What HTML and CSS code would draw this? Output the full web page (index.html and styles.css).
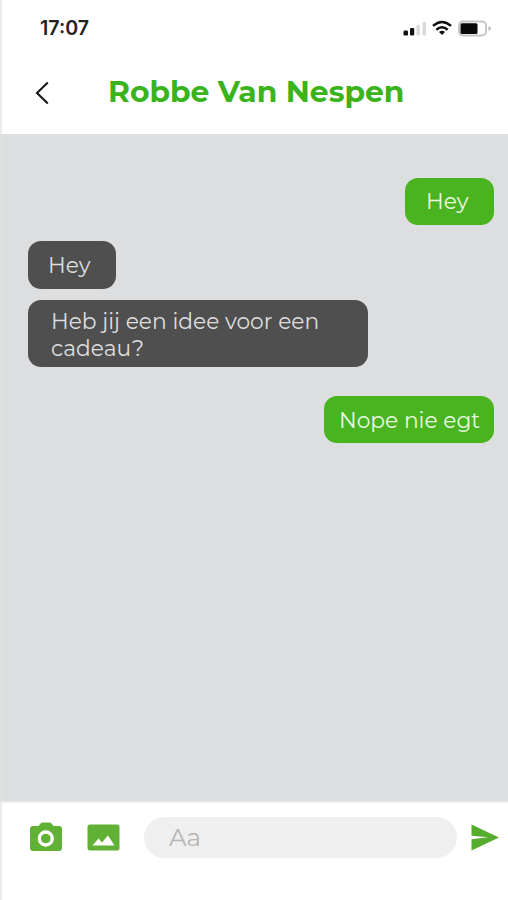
FILE: index.html
```
<!DOCTYPE html>
<html lang="nl">
<head>
<meta charset="utf-8">
<title>Robbe Van Nespen</title>
<link rel="stylesheet" href="styles.css">
</head>
<body>
<div class="phone">
  <div class="status">
    <span class="time">17:07</span>
    <svg class="indicators" width="90" height="18" viewBox="0 0 90 18">
      <rect x="1.500" y="11.500" width="4.500" height="5" rx="1.300" fill="#111"/>
      <rect x="8" y="9" width="4.200" height="7.500" rx="1.300" fill="#111"/>
      <rect x="14.500" y="6" width="3.300" height="10.500" rx="1" fill="#dadada"/>
      <rect x="20.500" y="3" width="3.600" height="13.500" rx="1" fill="#dadada"/>
      <path d="M31 6.900Q40 -1 49 6.900M34.300 10.700Q40 5.800 45.700 10.700" fill="none" stroke="#111" stroke-width="2.500"/>
      <path d="M37 13Q40 10.600 43 13L40 16Z" fill="#111"/>
      <rect x="57" y="2.500" width="27" height="14" rx="4" fill="none" stroke="#c6c6c6" stroke-width="2"/>
      <rect x="58.500" y="4.200" width="17" height="10.800" rx="1.500" fill="#080808"/>
      <path d="M86.500 7Q91.500 9.500 86.500 12Z" fill="#bbb"/>
    </svg>
  </div>
  <header class="header">
    <svg class="back" width="16" height="26" viewBox="0 0 16 26"><path d="M13.800 2.500L3 13L13.800 23.500" fill="none" stroke="#151515" stroke-width="2.100"/></svg>
    <h1 class="name">Robbe Van Nespen</h1>
  </header>
  <main class="chat">
    <div class="bubble sent short">Hey</div>
    <div class="bubble received short">Hey</div>
    <div class="bubble received long">Heb jij een idee voor een<br>cadeau?</div>
    <div class="bubble sent medium">Nope nie egt</div>
  </main>
  <footer class="composer">
    <svg class="camera" width="32" height="30" viewBox="0 0 32 30"><path fill="#61b136" d="M10.500 1.500Q11.500 .5 13 .5H19Q20.500 .5 21.500 1.500L23.500 4H29Q32 4 32 7V26Q32 29 29 29H3Q0 29 0 26V7Q0 4 3 4H8.500Z"/><circle cx="15.800" cy="16.500" r="6.500" fill="none" stroke="#fff" stroke-width="3.300"/></svg>
    <svg class="photo" width="33" height="27" viewBox="0 0 33 27"><rect x=".5" y=".5" width="32" height="26" rx="2.500" fill="#61b136"/><path d="M5.500 21.500L11.500 14.500L15 18.500L21 11.500L27.500 21.500Z" fill="#fff"/></svg>
    <div class="field">Aa</div>
    <svg class="send" width="28" height="27" viewBox="0 0 28 27"><path d="M.5 .5L28 13.500L.5 26.500V15.300L17 13.300L.5 11.800Z" fill="#56ad2d"/></svg>
  </footer>
</div>
</body>
</html>
```
FILE: styles.css
```
* {
  box-sizing: border-box;
}

body {
  margin: 0;
  background: #fff;
  font-family: Montserrat, Inter, "Liberation Sans", sans-serif;
}

.phone {
  display: flex;
  flex-direction: column;
  height: 900px;
}

.status,
.header,
.composer {
  border-left: 2px solid #ebebeb;
}

.status {
  display: flex;
  justify-content: space-between;
  align-items: center;
  height: 56px;
  padding: 0 16px 0 38px;
}

.time {
  font-family: Inter, sans-serif;
  font-size: 19.6px;
  font-weight: 600;
  color: #222;
}

.header {
  display: flex;
  align-items: center;
  height: 78px;
  padding: 0 0 7px 32px;
}

.back {
  margin-top: 3px;
}

.name {
  margin: 0 0 2px 58px;
  font-size: 29.8px;
  font-weight: 700;
  line-height: 36px;
  white-space: nowrap;
  color: #3bb31a;
}

.chat {
  display: flex;
  flex-direction: column;
  align-items: flex-start;
  height: 669px;
  padding: 44px 14px 0 26px;
  background: #dddee0;
  border-left: 2px solid #dfe1df;
  border-bottom: 2px solid #ececed;
}

.bubble {
  display: flex;
  align-items: center;
  height: 47px;
  border-radius: 13px;
  font-size: 21.75px;
  line-height: 27px;
  white-space: nowrap;
}

.sent {
  align-self: flex-end;
  background: #49b41f;
  color: #e8f8e2;
}

.received {
  background: #4f4f4f;
  color: #dedede;
}

.short {
  width: 89px;
  padding-left: 21px;
}

.received.short {
  width: 88px;
  height: 48px;
  margin: 16px 0 11px;
  padding-left: 20px;
}

.long {
  width: 340px;
  height: 67px;
  padding-top: 2px;
  padding-left: 23px;
}

.medium {
  width: 170px;
  margin-top: 29px;
  padding-top: 1px;
  padding-left: 15px;
}

.composer {
  display: flex;
  align-items: center;
  height: 97px;
  padding: 0 0 29px 28px;
}

.photo {
  margin-left: 25px;
}

.field {
  display: flex;
  align-items: center;
  width: 313px;
  height: 41px;
  margin-left: 24px;
  padding-left: 25px;
  border-radius: 21px;
  background: #efefef;
  color: #b5b5b5;
  font-size: 24.5px;
}

.send {
  margin-left: 14px;
}
```
